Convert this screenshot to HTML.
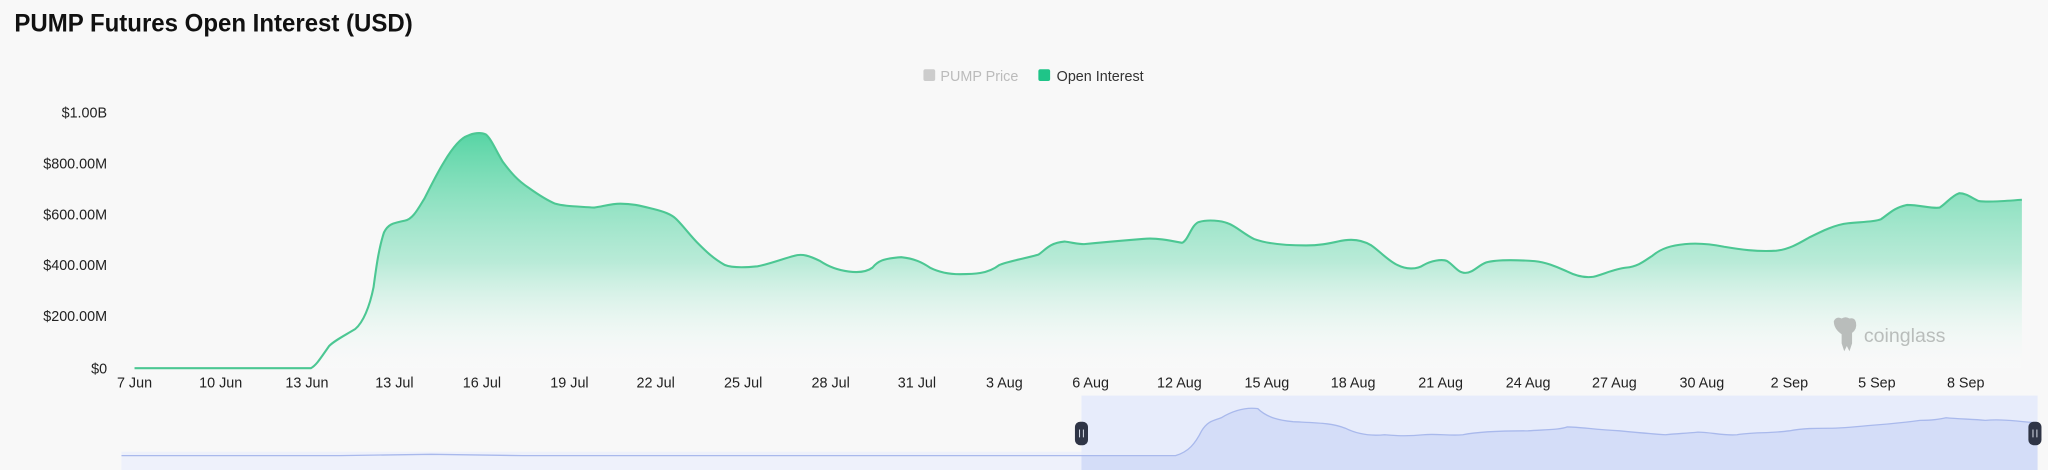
<!DOCTYPE html>
<html><head><meta charset="utf-8"><style>
html,body{margin:0;padding:0;background:#f8f8f8;width:2048px;height:470px;overflow:hidden}
svg{display:block}
text{font-family:"Liberation Sans",sans-serif}
</style></head><body>
<svg width="2048" height="470" viewBox="0 0 1568 360" preserveAspectRatio="none">
<defs>
<linearGradient id="g" x1="0" y1="0" x2="0" y2="1">
<stop offset="0" stop-color="#4fd3a0" stop-opacity="0.95"/>
<stop offset="0.55" stop-color="#8fe2c2" stop-opacity="0.6"/>
<stop offset="1" stop-color="#ffffff" stop-opacity="0.1"/>
</linearGradient>
</defs>
<rect width="1568" height="360" fill="#f8f8f8"/>
<text x="11" y="24" font-size="19" font-weight="bold" fill="#111" textLength="305" lengthAdjust="spacingAndGlyphs">PUMP Futures Open Interest (USD)</text>
<rect x="707" y="53" width="9" height="9" rx="1.5" fill="#ccc"/>
<text x="720" y="62" font-size="11" fill="#bbb">PUMP Price</text>
<rect x="795" y="53" width="9" height="9" rx="1.5" fill="#1fc488"/>
<text x="809" y="62" font-size="11" fill="#333">Open Interest</text>
<g font-size="11" fill="#222" text-anchor="end">
<text x="82" y="90">$1.00B</text><text x="82" y="129">$800.00M</text><text x="82" y="168">$600.00M</text><text x="82" y="207">$400.00M</text><text x="82" y="246">$200.00M</text><text x="82" y="286">$0</text>
</g>
<path id="area" fill="url(#g)" d="M103,282 L238,282 C242,280 245,275 252,265 C256,261 262,258 272,252 C278,247 283,235 286,220 C288,205 290,190 294,178 C297,172 300,171 310,169 C316,168 320,160 325,152 C330,142 335,132 340,124 C346,114 352,106 358,104 C362,102 368,101 372,103 C376,106 380,116 385,124 C391,132 396,138 405,144 C412,149 418,153 425,156 C432,158 440,158 455,159 C462,158 468,156 475,156 C485,156 492,158 500,160 C508,162 514,164 518,168 C524,174 528,180 535,187 C540,192 546,198 555,203 C560,205 570,205 580,204 C590,202 600,198 608,196 C614,194 620,196 628,200 C634,204 642,207 650,208 C658,209 664,208 668,205 C672,200 676,198 690,197 C700,198 706,201 712,205 C718,208 726,210 735,210 C745,210 756,210 765,203 C772,200 785,198 795,195 C800,192 803,186 815,185 C822,186 826,187 830,187 C840,186 850,185 875,183 C885,182 895,184 905,186 C910,184 912,172 918,170 C925,168 935,169 940,171 C946,173 952,179 960,183 C968,186 980,188 1000,188 C1015,188 1022,185 1030,184 C1038,183 1045,185 1050,188 C1056,192 1063,200 1070,203 C1076,206 1084,207 1090,203 C1095,200 1104,198 1108,200 C1113,203 1116,209 1122,209 C1128,209 1132,203 1138,201 C1145,199 1160,199 1175,200 C1185,201 1193,205 1200,208 C1206,211 1213,213 1220,212 C1228,210 1236,206 1245,205 C1255,204 1260,199 1265,196 C1272,190 1280,188 1290,187 C1300,186 1310,187 1320,189 C1332,191 1345,193 1360,192 C1370,191 1378,186 1385,182 C1395,177 1405,172 1415,171 C1425,170 1435,170 1440,168 C1446,164 1450,159 1460,157 C1470,157 1480,160 1485,159 C1490,156 1494,150 1500,148 C1506,148 1510,152 1515,154 C1522,155 1535,154 1548,153 L1548,282 Z"/>
<path fill="none" stroke="#4cc793" stroke-width="1.6" d="M103,282 L238,282 C242,280 245,275 252,265 C256,261 262,258 272,252 C278,247 283,235 286,220 C288,205 290,190 294,178 C297,172 300,171 310,169 C316,168 320,160 325,152 C330,142 335,132 340,124 C346,114 352,106 358,104 C362,102 368,101 372,103 C376,106 380,116 385,124 C391,132 396,138 405,144 C412,149 418,153 425,156 C432,158 440,158 455,159 C462,158 468,156 475,156 C485,156 492,158 500,160 C508,162 514,164 518,168 C524,174 528,180 535,187 C540,192 546,198 555,203 C560,205 570,205 580,204 C590,202 600,198 608,196 C614,194 620,196 628,200 C634,204 642,207 650,208 C658,209 664,208 668,205 C672,200 676,198 690,197 C700,198 706,201 712,205 C718,208 726,210 735,210 C745,210 756,210 765,203 C772,200 785,198 795,195 C800,192 803,186 815,185 C822,186 826,187 830,187 C840,186 850,185 875,183 C885,182 895,184 905,186 C910,184 912,172 918,170 C925,168 935,169 940,171 C946,173 952,179 960,183 C968,186 980,188 1000,188 C1015,188 1022,185 1030,184 C1038,183 1045,185 1050,188 C1056,192 1063,200 1070,203 C1076,206 1084,207 1090,203 C1095,200 1104,198 1108,200 C1113,203 1116,209 1122,209 C1128,209 1132,203 1138,201 C1145,199 1160,199 1175,200 C1185,201 1193,205 1200,208 C1206,211 1213,213 1220,212 C1228,210 1236,206 1245,205 C1255,204 1260,199 1265,196 C1272,190 1280,188 1290,187 C1300,186 1310,187 1320,189 C1332,191 1345,193 1360,192 C1370,191 1378,186 1385,182 C1395,177 1405,172 1415,171 C1425,170 1435,170 1440,168 C1446,164 1450,159 1460,157 C1470,157 1480,160 1485,159 C1490,156 1494,150 1500,148 C1506,148 1510,152 1515,154 C1522,155 1535,154 1548,153"/>
<g fill="#b9bdbb">
<path d="M1404,246 q2,-4 6,-2 q3,-2 6,0 q4,-1 5,3 q1,5 -3,8 l0,8 l-2,6 l-2,-4 l-2,4 l-2,-6 l0,-7 q-6,-4 -6,-10z"/>
<text x="1427" y="262" font-size="15">coinglass</text>
</g>
<rect x="93" y="346" width="1467" height="14" fill="#eef1fb"/>
<rect x="828" y="303" width="732" height="57" fill="#e7ecfb"/>
<path fill="#d4ddf8" d="M828,349 L900,349 C910,346 915,340 920,330 C925,322 930,322 935,320 C945,314 955,312 963,313 C970,320 980,322 990,323 C1010,324 1020,324 1030,328 C1040,333 1050,334 1060,333 C1070,334 1080,334 1090,333 C1100,332 1110,334 1120,333 C1130,331 1150,330 1170,330 C1185,329 1195,329 1200,327 C1210,327 1220,329 1240,330 C1250,331 1260,332 1275,333 C1285,332 1290,332 1300,331 C1310,331 1320,334 1330,333 C1340,331 1355,332 1370,330 C1380,328 1390,328 1400,328 C1410,328 1420,327 1430,326 C1445,325 1455,324 1470,322 C1480,322 1485,321 1490,320 C1500,321 1510,321 1520,322 C1530,321 1540,322 1555,323 L1560,324 L1560,360 L828,360 Z"/>
<path fill="none" stroke="#a9b9ec" stroke-width="1" d="M93,349 L260,349 L330,348 L400,349 L900,349 C910,346 915,340 920,330 C925,322 930,322 935,320 C945,314 955,312 963,313 C970,320 980,322 990,323 C1010,324 1020,324 1030,328 C1040,333 1050,334 1060,333 C1070,334 1080,334 1090,333 C1100,332 1110,334 1120,333 C1130,331 1150,330 1170,330 C1185,329 1195,329 1200,327 C1210,327 1220,329 1240,330 C1250,331 1260,332 1275,333 C1285,332 1290,332 1300,331 C1310,331 1320,334 1330,333 C1340,331 1355,332 1370,330 C1380,328 1390,328 1400,328 C1410,328 1420,327 1430,326 C1445,325 1455,324 1470,322 C1480,322 1485,321 1490,320 C1500,321 1510,321 1520,322 C1530,321 1540,322 1560,324"/>
<rect x="823" y="323" width="10" height="18" rx="4" fill="#2f3546"/>
<rect x="1553" y="323" width="10" height="18" rx="4" fill="#2f3546"/>
<g stroke="#cfd4e0" stroke-width="0.8"><line x1="826.5" y1="329" x2="826.5" y2="335"/><line x1="829.5" y1="329" x2="829.5" y2="335"/><line x1="1556.5" y1="329" x2="1556.5" y2="335"/><line x1="1559.5" y1="329" x2="1559.5" y2="335"/></g>
<g font-size="11" fill="#222" text-anchor="middle">
<text x="103" y="297">7 Jun</text><text x="169" y="297">10 Jun</text><text x="235" y="297">13 Jun</text><text x="302" y="297">13 Jul</text><text x="369" y="297">16 Jul</text><text x="436" y="297">19 Jul</text><text x="502" y="297">22 Jul</text><text x="569" y="297">25 Jul</text><text x="636" y="297">28 Jul</text><text x="702" y="297">31 Jul</text><text x="769" y="297">3 Aug</text><text x="835" y="297">6 Aug</text><text x="903" y="297">12 Aug</text><text x="970" y="297">15 Aug</text><text x="1036" y="297">18 Aug</text><text x="1103" y="297">21 Aug</text><text x="1170" y="297">24 Aug</text><text x="1236" y="297">27 Aug</text><text x="1303" y="297">30 Aug</text><text x="1370" y="297">2 Sep</text><text x="1437" y="297">5 Sep</text><text x="1505" y="297">8 Sep</text>
</g>
</svg>
</body></html>
